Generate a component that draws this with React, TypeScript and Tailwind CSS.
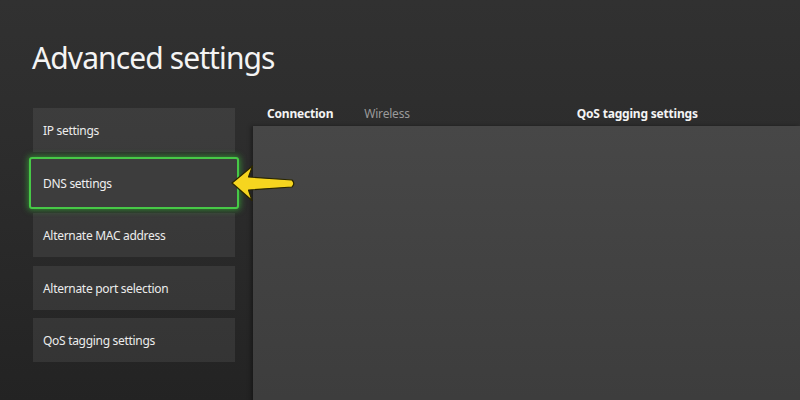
import React from "react";

const items = [
  "IP settings",
  "DNS settings",
  "Alternate MAC address",
  "Alternate port selection",
  "QoS tagging settings",
];

export default function App() {
  return (
    <div
      className="relative w-[800px] h-[400px] overflow-hidden bg-gradient-to-b from-[#313131] via-[#2b2b2b] to-[#232323] text-white"
      style={{ fontFamily: '"Noto Sans", "Open Sans", sans-serif' }}
    >
      <h1 className="pl-[32px] pt-[38px] text-[30px] leading-[40px] tracking-[-0.9px] font-normal text-[#f4f4f4]">
        Advanced settings
      </h1>
      <div className="flex mt-[30px]">
        <div className="ml-[33px] w-[202px] flex flex-col gap-[8.5px]">
          {items.map((t, i) =>
            i === 1 ? (
              <div
                key={t}
                className="-mx-[4px] -my-[4px] h-[52px] flex items-center pl-[12px] pt-[2px] rounded-[3px] border-2 border-[#47c947] bg-[#3d3d3d] shadow-[0_0_6px_1px_rgba(60,200,60,0.6)] text-[12px] tracking-[-0.3px] text-[#f0f0f0]"
              >
                {t}
              </div>
            ) : (
              <div
                key={t}
                className="h-[44px] flex items-center pl-[10px] pt-[2px] bg-white/[0.075] text-[12px] tracking-[-0.3px] text-[#ececec]"
              >
                {t}
              </div>
            )
          )}
        </div>
        <div className="ml-[18px] flex-1 flex flex-col -mt-[5px]">
          <div className="h-[23px] flex items-start pt-[3px] text-[12px] leading-[16px]">
            <span className="ml-[14px] font-bold text-[#f4f4f4] tracking-[-0.2px]">Connection</span>
            <span className="ml-[31px] text-[#9a9a9a] tracking-[-0.2px]">Wireless</span>
            <span className="ml-[167px] font-bold text-[#f4f4f4] tracking-[-0.2px]">QoS tagging settings</span>
          </div>
          <div className="h-[300px] bg-gradient-to-b from-[#474747] to-[#3c3c3c] shadow-[-2px_0_4px_rgba(0,0,0,0.35)]" />
        </div>
      </div>
      <svg
        className="absolute left-[228px] top-[162px]"
        width="72"
        height="42"
        viewBox="228 162 72 42"
      >
        <path
          d="M232 183 L252.5 166 L248.5 177 L292 180 Q295.5 183.5 292 187 L248.5 190 L252 200.5 Z"
          fill="#f6d51f"
          stroke="#2a2600"
          strokeWidth="1.2"
          strokeLinejoin="round"
        />
      </svg>
    </div>
  );
}
